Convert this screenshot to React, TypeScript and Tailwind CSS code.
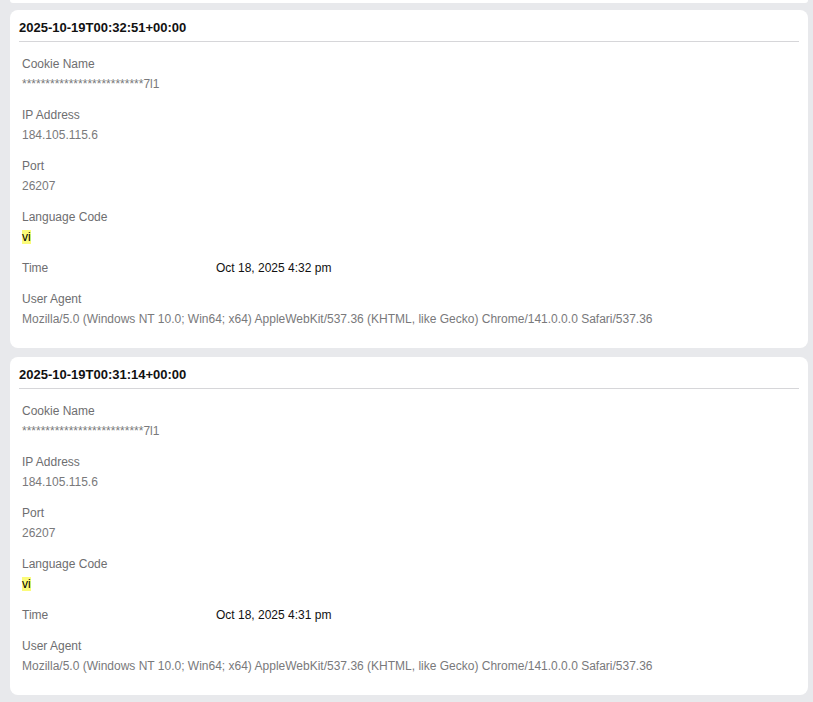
const entries = [
  { stamp: '2025-10-19T00:32:51+00:00', time: 'Oct 18, 2025 4:32 pm' },
  { stamp: '2025-10-19T00:31:14+00:00', time: 'Oct 18, 2025 4:31 pm' },
];

const ua =
  'Mozilla/5.0 (Windows NT 10.0; Win64; x64) AppleWebKit/537.36 (KHTML, like Gecko) Chrome/141.0.0.0 Safari/537.36';

function Field({ label, children }: { label: string; children: React.ReactNode }) {
  return (
    <div className="flex flex-col gap-[2px]">
      <div className="text-[12px] leading-[18px] text-[#6e6e70]">{label}</div>
      <div className="text-[12px] leading-[18px] text-[#79797b]">{children}</div>
    </div>
  );
}

function LogCard({ stamp, time }: { stamp: string; time: string }) {
  return (
    <div className="rounded-lg bg-white px-[9px] pt-[11px] pb-[20px]">
      <div className="border-b border-[#d6d6d9] pb-[6px] text-[13px] leading-[14px] font-bold text-[#111]">
        {stamp}
      </div>
      <div className="flex flex-col gap-[13px] px-[3px] pt-[13px]">
        <Field label="Cookie Name">**************************7l1</Field>
        <Field label="IP Address">184.105.115.6</Field>
        <Field label="Port">26207</Field>
        <Field label="Language Code">
          <span className="bg-[#fbfb7a] text-black">vi</span>
        </Field>
        <div className="grid grid-cols-[194px_1fr] text-[12px] leading-[18px]">
          <div className="text-[#6e6e70]">Time</div>
          <div className="text-[#111]">{time}</div>
        </div>
        <Field label="User Agent">{ua}</Field>
      </div>
    </div>
  );
}

export default function App() {
  return (
    <div
      className="min-h-screen bg-[#e8e9ec] pl-[10px] pr-[5px]"
      style={{ fontFamily: '"Liberation Sans", Arial, sans-serif' }}
    >
      <div className="h-[3px] rounded-b-lg bg-white" />
      <div className="flex flex-col gap-[9px] pt-[7px] pb-[9px]">
        {entries.map((e) => (
          <LogCard key={e.stamp} stamp={e.stamp} time={e.time} />
        ))}
      </div>
    </div>
  );
}
